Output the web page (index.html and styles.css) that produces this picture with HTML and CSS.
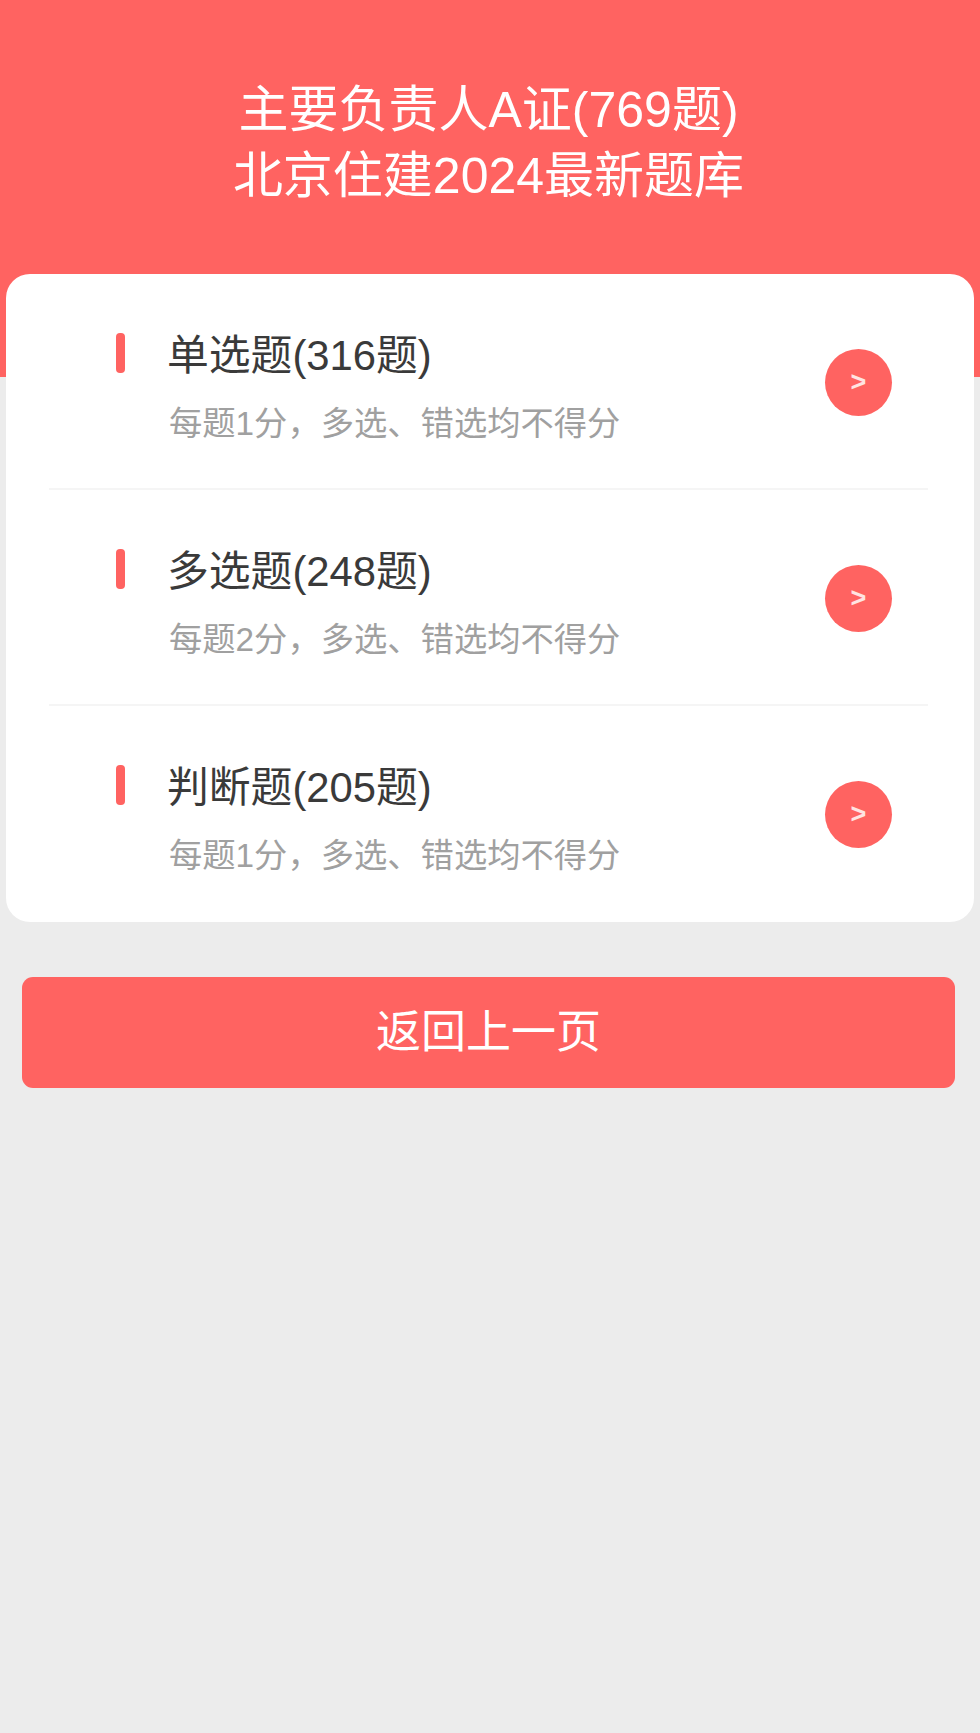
FILE: index.html
```html
<!DOCTYPE html>
<html lang="zh-CN">
<head>
    <meta charset="UTF-8">
    <meta name="viewport" content="width=device-width, initial-scale=1.0">
    <title>主要负责人A证</title>
    <link rel="stylesheet" href="styles.css">
</head>
<body>
    <header class="banner">
        <h1>主要负责人A证(769题)<br>北京住建2024最新题库</h1>
    </header>

    <div class="card">
        <a class="row" href="#">
            <span class="bar"></span>
            <div class="info">
                <h2>单选题(316题)</h2>
                <p>每题1分，多选、错选均不得分</p>
            </div>
            <span class="go">&gt;</span>
        </a>
        <a class="row" href="#">
            <span class="bar"></span>
            <div class="info">
                <h2>多选题(248题)</h2>
                <p>每题2分，多选、错选均不得分</p>
            </div>
            <span class="go">&gt;</span>
        </a>
        <a class="row" href="#">
            <span class="bar"></span>
            <div class="info">
                <h2>判断题(205题)</h2>
                <p>每题1分，多选、错选均不得分</p>
            </div>
            <span class="go">&gt;</span>
        </a>
    </div>

    <a class="back-btn" href="#">返回上一页</a>
</body>
</html>
```

FILE: styles.css
```css
body {
    font-family: "Liberation Sans", "Noto Sans CJK SC", sans-serif;
    margin: 0;
    padding: 0;
    background-color: #ececec;
    min-height: 1733px;
}

a {
    text-decoration: none;
}

.banner {
    background-color: #ff6361;
    height: 377px;
    padding: 77px 3px 0 0;
    box-sizing: border-box;
}

.banner h1 {
    margin: 0;
    color: #fff;
    font-size: 50px;
    font-weight: normal;
    line-height: 66px;
    text-align: center;
}

.card {
    background-color: #fff;
    border-radius: 24px;
    margin: -103px 6px 0;
    padding: 0 46px 0 43px;
    position: relative;
}

.row {
    display: flex;
    align-items: flex-start;
    height: 216px;
    box-sizing: border-box;
    padding: 57px 36px 0 67px;
    border-bottom: 2px solid #f5f5f5;
}

.row:last-child {
    border-bottom: none;
}

.bar {
    width: 9px;
    height: 40px;
    margin-top: 2px;
    border-radius: 4px;
    background-color: #ff6361;
}

.info {
    margin-left: 42px;
    margin-right: auto;
}

.info h2 {
    margin: 0;
    color: #3a3a3a;
    font-size: 41.8px;
    font-weight: normal;
    line-height: 50px;
}

.info p {
    margin: 21px 0 0 2px;
    color: #a0a0a0;
    font-size: 33.3px;
    line-height: 44px;
}

.go {
    width: 67px;
    height: 67px;
    margin-top: 18px;
    box-sizing: border-box;
    border-radius: 50%;
    background-color: #ff6361;
    color: #ffe4e2;
    font-size: 27px;
    font-weight: bold;
    display: flex;
    align-items: center;
    justify-content: center;
}

.back-btn {
    display: flex;
    align-items: center;
    justify-content: center;
    height: 111px;
    box-sizing: border-box;
    padding-bottom: 8px;
    margin: 55px 25px 0 22px;
    border-radius: 11px;
    background-color: #ff6361;
    color: #fff;
    font-size: 45px;
}
```
